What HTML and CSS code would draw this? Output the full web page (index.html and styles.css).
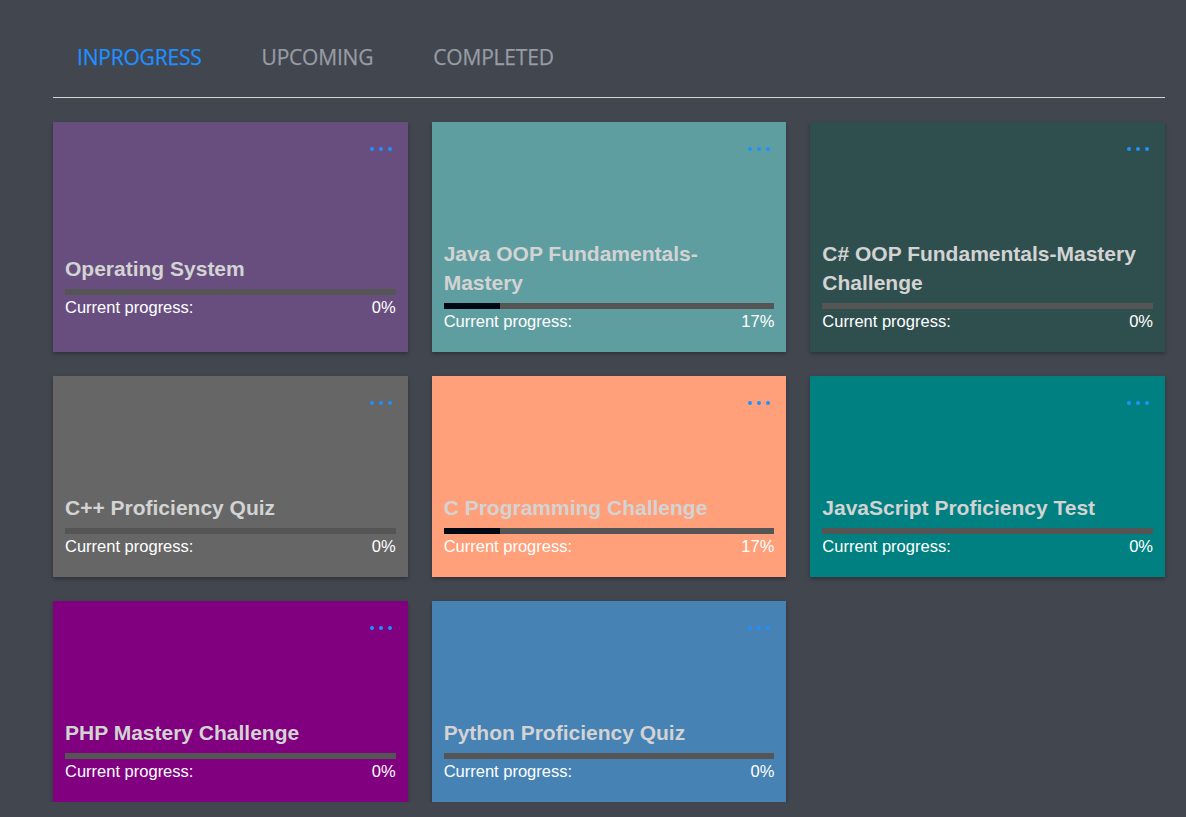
FILE: index.html
```html
<!DOCTYPE html>
<html>
<head>
<meta charset="utf-8">
<link rel="stylesheet" href="styles.css">
</head>
<body>
<div class="page">
  <nav class="tabs">
    <span class="tab active">INPROGRESS</span>
    <span class="tab">UPCOMING</span>
    <span class="tab">COMPLETED</span>
  </nav>
  <div class="grid">
    <div class="card c-os">
      <div class="card-top"><span class="dots"><i></i><i></i><i></i></span></div>
      <div class="card-body">
        <h3 class="title">Operating System</h3>
        <div class="bar"><div class="fill" style="width:0%"></div></div>
        <div class="meta"><span>Current progress:</span><span>0%</span></div>
      </div>
    </div>
    <div class="card c-java">
      <div class="card-top"><span class="dots"><i></i><i></i><i></i></span></div>
      <div class="card-body">
        <h3 class="title">Java OOP Fundamentals-Mastery</h3>
        <div class="bar"><div class="fill" style="width:17%"></div></div>
        <div class="meta"><span>Current progress:</span><span>17%</span></div>
      </div>
    </div>
    <div class="card c-cs">
      <div class="card-top"><span class="dots"><i></i><i></i><i></i></span></div>
      <div class="card-body">
        <h3 class="title">C# OOP Fundamentals-Mastery Challenge</h3>
        <div class="bar"><div class="fill" style="width:0%"></div></div>
        <div class="meta"><span>Current progress:</span><span>0%</span></div>
      </div>
    </div>
    <div class="card c-cpp">
      <div class="card-top"><span class="dots"><i></i><i></i><i></i></span></div>
      <div class="card-body">
        <h3 class="title">C++ Proficiency Quiz</h3>
        <div class="bar"><div class="fill" style="width:0%"></div></div>
        <div class="meta"><span>Current progress:</span><span>0%</span></div>
      </div>
    </div>
    <div class="card c-c">
      <div class="card-top"><span class="dots"><i></i><i></i><i></i></span></div>
      <div class="card-body">
        <h3 class="title">C Programming Challenge</h3>
        <div class="bar"><div class="fill" style="width:17%"></div></div>
        <div class="meta"><span>Current progress:</span><span>17%</span></div>
      </div>
    </div>
    <div class="card c-js">
      <div class="card-top"><span class="dots"><i></i><i></i><i></i></span></div>
      <div class="card-body">
        <h3 class="title">JavaScript Proficiency Test</h3>
        <div class="bar"><div class="fill" style="width:0%"></div></div>
        <div class="meta"><span>Current progress:</span><span>0%</span></div>
      </div>
    </div>
    <div class="card c-php">
      <div class="card-top"><span class="dots"><i></i><i></i><i></i></span></div>
      <div class="card-body">
        <h3 class="title">PHP Mastery Challenge</h3>
        <div class="bar"><div class="fill" style="width:0%"></div></div>
        <div class="meta"><span>Current progress:</span><span>0%</span></div>
      </div>
    </div>
    <div class="card c-py">
      <div class="card-top"><span class="dots"><i></i><i></i><i></i></span></div>
      <div class="card-body">
        <h3 class="title">Python Proficiency Quiz</h3>
        <div class="bar"><div class="fill" style="width:0%"></div></div>
        <div class="meta"><span>Current progress:</span><span>0%</span></div>
      </div>
    </div>
  </div>
</div>
</body>
</html>
```
FILE: styles.css
```css
html, body {
  margin: 0;
  padding: 0;
  background: #42464f;
}
.page {
  padding: 0 21px 0 53px;
}
.tabs {
  display: flex;
  gap: 60px;
  padding: 43px 0 26px 24px;
  border-bottom: 1px solid #d4d4d4;
}
.tab {
  font-family: "Open Sans", "Noto Sans", sans-serif;
  font-size: 21px;
  line-height: 28px;
  color: #979ca5;
  letter-spacing: -0.2px;
  -webkit-text-stroke: 0.25px currentColor;
}
.tab.active {
  color: #1e90ff;
}
.grid {
  margin-top: 24px;
  display: grid;
  grid-template-columns: repeat(3, 1fr);
  gap: 24px;
}
.card {
  display: flex;
  flex-direction: column;
  padding: 0 12px 21px;
  box-shadow: 0 2px 4px rgba(0, 0, 0, 0.3);
  font-family: "Liberation Sans", Arial, sans-serif;
}
.card-top {
  height: 117px;
  display: flex;
  justify-content: flex-end;
  align-items: flex-start;
  padding-top: 25px;
  padding-right: 4px;
  box-sizing: border-box;
}
.dots {
  display: flex;
  gap: 5px;
}
.dots i {
  width: 4px;
  height: 4px;
  border-radius: 50%;
  background: #1e90ff;
}
.card-body {
  flex: 1;
  display: flex;
  flex-direction: column;
  justify-content: center;
}
.title {
  margin: 0;
  font-size: 21px;
  line-height: 29px;
  font-weight: 700;
  color: #d3d3d3;
}
.bar {
  margin-top: 6px;
  height: 6px;
  background: #555555;
}
.fill {
  height: 100%;
  background: #000814;
}
.meta {
  margin-top: 3px;
  display: flex;
  justify-content: space-between;
  font-size: 16.5px;
  line-height: 19px;
  color: #ffffff;
}
.c-os { background: #674e7f; }
.c-java { background: #5f9ea0; }
.c-cs { background: #2f4f4f; }
.c-cpp { background: #666666; }
.c-c { background: #ffa07a; }
.c-js { background: #008080; }
.c-php { background: #800080; }
.c-py { background: #4682b4; }
```
